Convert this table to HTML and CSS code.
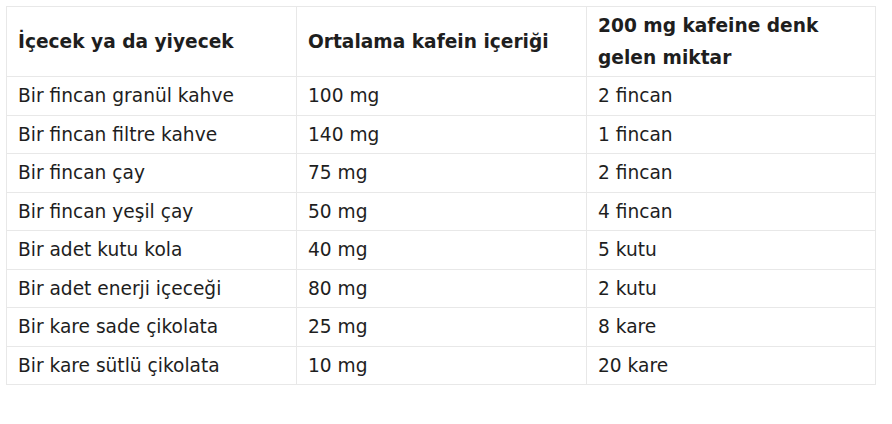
FILE: index.html
```html
<!DOCTYPE html>
<html lang="tr">
<head>
<meta charset="utf-8">
<link rel="stylesheet" href="styles.css">
</head>
<body>
<div class="wrap">
<table class="caf">
<thead>
<tr><th class="c1">İçecek ya da yiyecek</th><th class="c2">Ortalama kafein içeriği</th><th class="c3">200 mg kafeine denk gelen miktar</th></tr>
</thead>
<tbody>
<tr><td>Bir fincan granül kahve</td><td>100 mg</td><td>2 fincan</td></tr>
<tr><td>Bir fincan filtre kahve</td><td>140 mg</td><td>1 fincan</td></tr>
<tr><td>Bir fincan çay</td><td>75 mg</td><td>2 fincan</td></tr>
<tr><td>Bir fincan yeşil çay</td><td>50 mg</td><td>4 fincan</td></tr>
<tr><td>Bir adet kutu kola</td><td>40 mg</td><td>5 kutu</td></tr>
<tr><td>Bir adet enerji içeceği</td><td>80 mg</td><td>2 kutu</td></tr>
<tr><td>Bir kare sade çikolata</td><td>25 mg</td><td>8 kare</td></tr>
<tr><td>Bir kare sütlü çikolata</td><td>10 mg</td><td>20 kare</td></tr>
</tbody>
</table>
</div>
</body>
</html>
```
FILE: styles.css
```css
html, body { margin: 0; padding: 0; background: #fff; }
.wrap { padding: 6px 0 0 6px; }
.caf {
  border-collapse: collapse;
  width: 870px;
  font-family: "DejaVu Sans", Verdana, sans-serif;
  font-size: 18.6px;
  line-height: 31.5px;
  color: #1e1e1e;
  table-layout: fixed;
}
.caf th, .caf td {
  border: 1px solid #e8e8e8;
  padding: 3px 11px;
  text-align: left;
  vertical-align: middle;
}
.caf th { font-weight: bold; }
.c1 { width: 267px; }
.c2 { width: 267px; }
```
